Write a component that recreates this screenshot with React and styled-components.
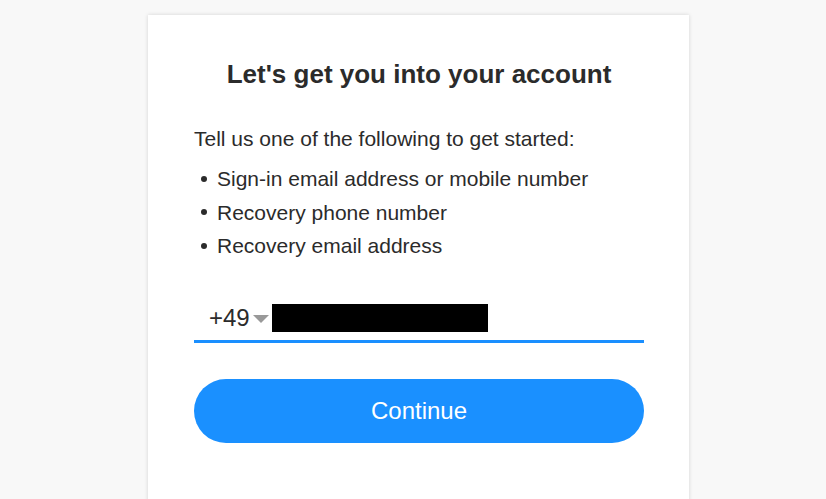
import React from "react"
import styled, { createGlobalStyle } from "styled-components"

const GlobalStyles = createGlobalStyle`
  html, body {
    margin: 0;
    padding: 0;
    background: #f8f8f8;
    font-family: "Liberation Sans", Arial, sans-serif;
    color: #2b2b2b;
  }
`

const Page = styled.div`
  display: flex;
  justify-content: center;
  padding-top: 15px;
  height: 484px;
  overflow: hidden;
`

const Card = styled.div`
  width: 541px;
  height: 520px;
  box-sizing: border-box;
  margin-left: 11px;
  padding: 42px 45px 0 46px;
  background: #fff;
  box-shadow: 0 0 4px rgba(0, 0, 0, 0.15);
`

const Title = styled.h1`
  margin: 0 0 33px;
  text-align: center;
  font-size: 26px;
  font-weight: 700;
  line-height: 34px;
  color: #2b2b2b;
`

const Intro = styled.p`
  margin: 0 0 8px;
  font-size: 21px;
  line-height: 30px;
`

const List = styled.ul`
  margin: 0;
  padding: 0;
  list-style: none;
`

const Item = styled.li`
  display: flex;
  align-items: center;
  font-size: 21px;
  line-height: 33.5px;

  &::before {
    content: "";
    width: 6px;
    height: 6px;
    border-radius: 50%;
    background: #2b2b2b;
    margin: 0 10px 0 7px;
  }
`

const PhoneField = styled.div`
  display: flex;
  align-items: center;
  margin-top: 36px;
  height: 38px;
  padding: 0 0 3px 15px;
  border-bottom: 3px solid #1a8fff;
`

const Prefix = styled.span`
  font-size: 24px;
  line-height: 28px;
  color: #2b2b2b;
`

const Caret = styled.span`
  width: 0;
  height: 0;
  margin: 2px 3px 0 3px;
  border-left: 8px solid transparent;
  border-right: 8px solid transparent;
  border-top: 8px solid #999;
`

const Redacted = styled.div`
  width: 216px;
  height: 28px;
  background: #000;
`

const Button = styled.button`
  display: block;
  width: 100%;
  height: 64px;
  margin-top: 36px;
  border: none;
  border-radius: 32px;
  background: #1a90ff;
  color: #fff;
  font-family: "Liberation Sans", Arial, sans-serif;
  font-size: 24px;
  cursor: pointer;
`

const App = () => (
  <>
    <GlobalStyles />
    <Page>
      <Card>
        <Title>Let's get you into your account</Title>
        <Intro>Tell us one of the following to get started:</Intro>
        <List>
          <Item>Sign-in email address or mobile number</Item>
          <Item>Recovery phone number</Item>
          <Item>Recovery email address</Item>
        </List>
        <PhoneField>
          <Prefix>+49</Prefix>
          <Caret />
          <Redacted />
        </PhoneField>
        <Button>Continue</Button>
      </Card>
    </Page>
  </>
)

export default App
